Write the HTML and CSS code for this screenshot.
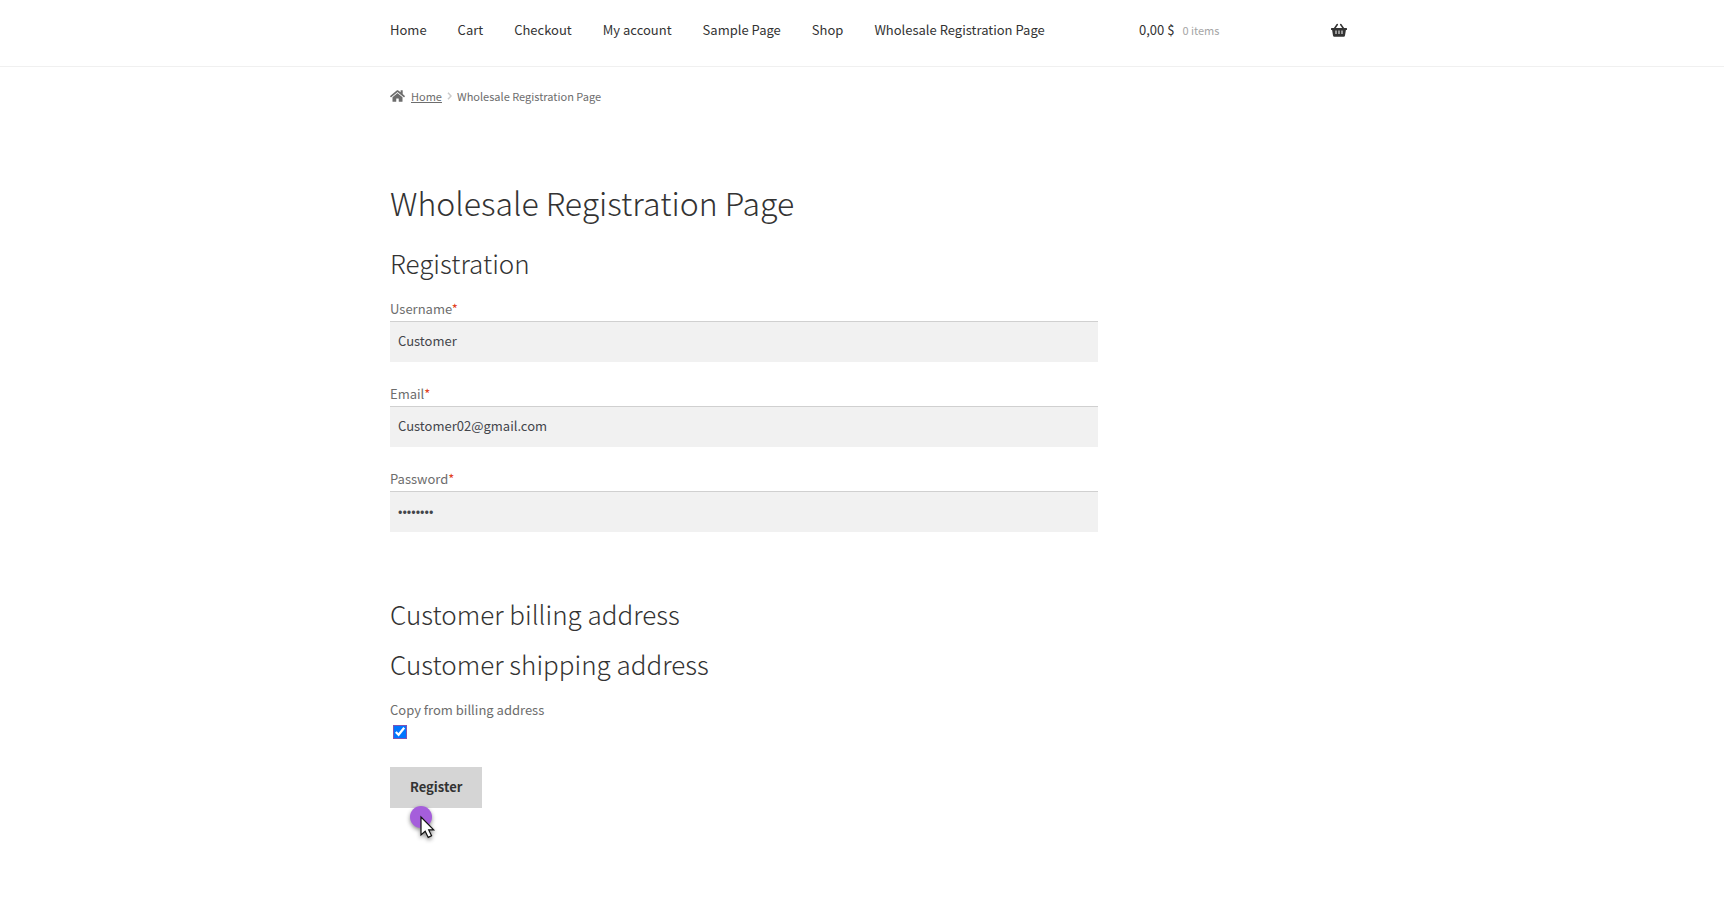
FILE: index.html
```html
<!DOCTYPE html>
<html lang="en">
<head>
<meta charset="utf-8">
<meta name="viewport" content="width=device-width, initial-scale=1">
<title>Wholesale Registration Page</title>
<link rel="stylesheet" href="styles.css">
</head>
<body>
<header class="site-header">
  <div class="container header-row">
    <nav class="main-nav" aria-label="Primary">
      <a href="#">Home</a>
      <a href="#">Cart</a>
      <a href="#">Checkout</a>
      <a href="#">My account</a>
      <a href="#">Sample Page</a>
      <a href="#">Shop</a>
      <a href="#">Wholesale Registration Page</a>
    </nav>
    <a class="cart" href="#">
      <span class="cart-total">0,00 $</span>
      <span class="cart-count">0 items</span>
      <svg class="cart-icon" viewBox="0 0 16 14" aria-hidden="true">
        <path d="M3.500 5.500 6.300 1.500M12.500 5.500 9.700 1.500" fill="none" stroke="currentColor" stroke-width="1.500" stroke-linecap="round"/>
        <path fill="currentColor" fill-rule="evenodd" d="M.6 5h14.800q.6 0 .6.600v.8q0 .6-.6.600h-.5l-.9 5.500q-.2 1.200-1.300 1.200H3.300q-1.100 0-1.300-1.200L1.100 7H.6Q0 7 0 6.400v-.8Q0 5 .6 5ZM4.500 7.500v3.500h1V7.500ZM7.500 7.500v3.500h1V7.500ZM10.500 7.500v3.500h1V7.500Z"/>
      </svg>
    </a>
  </div>
</header>

<div class="container">
  <nav class="breadcrumb" aria-label="Breadcrumb">
    <svg class="home-icon" viewBox="0 0 576 512" aria-hidden="true"><path fill="currentColor" d="M280.400 148.300 96 300.100V464c0 8.800 7.200 16 16 16l112.100-.3c8.800 0 15.900-7.200 15.900-16V368c0-8.800 7.200-16 16-16h64c8.800 0 16 7.200 16 16v95.600c0 8.900 7.200 16.100 16 16.100L464 480c8.800 0 16-7.200 16-16V300L295.700 148.300c-4.500-3.600-10.800-3.600-15.300 0zM571.600 251.500 488 182.600V44.100c0-6.600-5.400-12-12-12h-56c-6.600 0-12 5.400-12 12v72.600L318.500 43c-17.700-14.600-43.300-14.600-61 0L4.300 251.500c-5.100 4.200-5.800 11.800-1.600 16.900l25.500 31c4.200 5.100 11.800 5.900 16.900 1.600l235.200-193.700c4.500-3.600 10.800-3.600 15.300 0L530.900 301c5.100 4.200 12.700 3.500 16.900-1.600l25.500-31c4.200-5.200 3.400-12.700-1.700-16.900z"/></svg>
    <a href="#">Home</a>
    <svg class="crumb-sep" viewBox="0 0 5 8" aria-hidden="true"><path d="M1 .7 4 4 1 7.300" fill="none" stroke="currentColor" stroke-width="1.500"/></svg>
    <span>Wholesale Registration Page</span>
  </nav>

  <main class="content">
    <h1>Wholesale Registration Page</h1>
    <form>
      <h2>Registration</h2>
      <div class="field">
        <label for="username">Username<span class="required">*</span></label>
        <input class="text-input" id="username" type="text" value="Customer">
      </div>
      <div class="field">
        <label for="email">Email<span class="required">*</span></label>
        <input class="text-input" id="email" type="email" value="Customer02@gmail.com">
      </div>
      <div class="field">
        <label for="password">Password<span class="required">*</span></label>
        <input class="text-input" id="password" type="password" value="password">
      </div>
      <h2 class="address-title">Customer billing address</h2>
      <h2>Customer shipping address</h2>
      <div class="field">
        <label for="copy">Copy from billing address</label>
        <input class="check" id="copy" type="checkbox" checked>
      </div>
      <div class="submit-row">
        <button class="submit" type="button">Register</button>
        <svg class="pointer" viewBox="0 0 36 44" aria-hidden="true">
          <circle cx="14" cy="14" r="11" fill="#a55edb"/>
          <path d="M14 14V32L18.200 28.300L21.200 34.400L24.600 32.700L21.700 26.900H26.700Z" fill="#fff" stroke="#111" stroke-width="1.200"/>
        </svg>
      </div>
    </form>
  </main>
</div>
</body>
</html>
```
FILE: styles.css
```css
* {
  box-sizing: border-box;
}

body {
  margin: 0;
  background: #fff;
  color: #6d6d6d;
  font-family: "Noto Sans CJK JP", "Noto Sans CJK SC", sans-serif;
  font-size: 13px;
  line-height: 22px;
}

.container {
  max-width: 970px;
  margin: 0 auto;
  padding-left: 13px;
}

.site-header {
  border-bottom: 1px solid #f0f0f0;
}

.header-row {
  display: grid;
  grid-template-columns: 1fr 208px;
  column-gap: 42px;
  align-items: center;
  padding-top: 19px;
  padding-bottom: 25px;
}

.main-nav {
  display: flex;
  gap: 31px;
  white-space: nowrap;
}

.main-nav a,
.cart {
  color: #333;
  text-decoration: none;
}

.cart {
  display: flex;
  align-items: center;
  gap: 8px;
}

.cart-count {
  color: #a5a5a5;
  font-size: 11px;
}

.cart-icon {
  width: 16px;
  height: 14px;
  margin-left: auto;
}

.breadcrumb {
  display: flex;
  align-items: center;
  padding: 18px 0 73px;
  font-size: 11px;
}

.breadcrumb a {
  color: inherit;
}

.home-icon {
  width: 15px;
  height: 14px;
  margin-right: 6px;
}

.crumb-sep {
  width: 5px;
  height: 8px;
  margin: 0 5px;
  color: #ccc;
}

.content {
  width: 74%;
  padding-bottom: 96px;
}

h1,
h2 {
  color: #333;
  font-weight: 300;
}

h1 {
  margin: 0 0 21px;
  font-size: 32px;
  line-height: 44px;
}

h2 {
  margin: 0 0 14px;
  font-size: 26px;
  line-height: 36px;
}

.field {
  margin-bottom: 22px;
}

h2 + .field {
  margin-top: 18px;
}

.field label {
  display: block;
  margin-bottom: 2px;
  line-height: 20px;
}

.required {
  color: #e2401c;
}

.text-input {
  display: block;
  width: 100%;
  height: 41px;
  padding: 0 8px 4px;
  border: 0;
  border-top: 1px solid #d0d0d0;
  border-radius: 0;
  background: #f1f1f1;
  color: #43454b;
  font: inherit;
}

.address-title {
  margin-top: 64px;
}

.check {
  display: block;
  width: 14px;
  height: 14px;
  margin: 5px 3px;
  accent-color: #0075ff;
  outline: 1px solid #7f54b3;
  outline-offset: -1px;
}

.submit-row {
  position: relative;
  margin-top: 28px;
}

.submit {
  height: 41px;
  padding: 0 20px 2px;
  border: 0;
  background: #d5d5d5;
  color: #333;
  font: inherit;
  font-weight: 700;
}

.pointer {
  position: absolute;
  top: 36px;
  left: 17px;
  width: 36px;
  height: 44px;
  filter: drop-shadow(0 2px 2px rgb(0 0 0 / 45%));
}
```
